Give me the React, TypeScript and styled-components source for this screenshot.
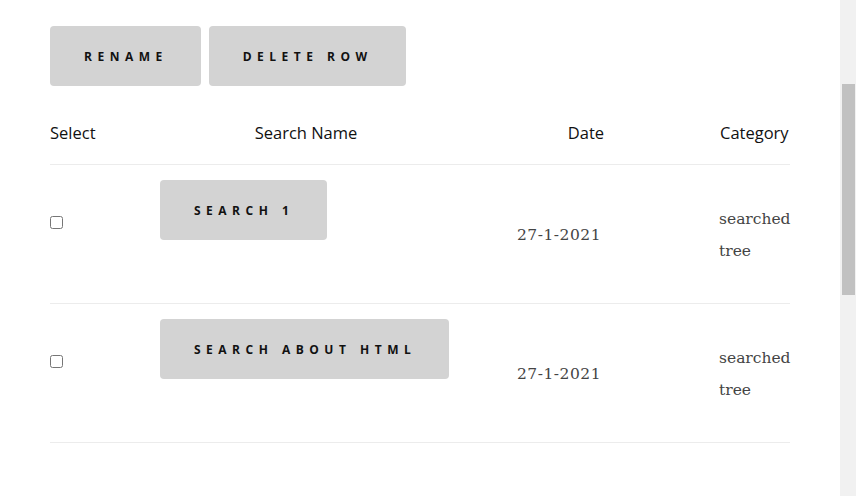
import React from "react";
import styled, { createGlobalStyle } from "styled-components";

const GlobalStyle = createGlobalStyle`
  html, body { margin: 0; padding: 0; background: #fff; overflow: hidden; }
  * { box-sizing: border-box; }
`;

const Page = styled.div`
  display: flex;
  width: 856px;
  height: 496px;
  background: #fff;
`;

const Main = styled.main`
  flex: 1;
  padding: 26px 50px 0 50px;
  font-family: "Open Sans", "Liberation Sans", sans-serif;
`;

const ScrollTrack = styled.div`
  width: 16px;
  background: #f1f1f1;
  padding: 84px 1px 0 2px;
`;

const ScrollThumb = styled.div`
  height: 211px;
  background: #c1c1c1;
`;

const Toolbar = styled.div`
  display: flex;
  gap: 8px;
`;

const ActionButton = styled.button`
  height: 60px;
  padding: 0 33px 0 34px;
  border: none;
  border-radius: 4px;
  background: #d3d3d3;
  color: #111;
  font-family: "Open Sans", "Liberation Sans", sans-serif;
  font-weight: 700;
  font-size: 12px;
  letter-spacing: 5.5px;
  text-transform: uppercase;
  white-space: nowrap;
  cursor: pointer;
`;

const Table = styled.div`
  margin-top: 16px;
  width: 740px;
`;

const Row = styled.div<{ $header?: boolean }>`
  display: grid;
  grid-template-columns: 110px 292px 268px 70px;
  border-bottom: 1px solid #ececec;
  height: ${(p) => (p.$header ? "63px" : "139px")};
  align-items: center;
`;

const HeadCell = styled.div<{ $align: "left" | "center" }>`
  text-align: ${(p) => p.$align};
  font-size: 16.5px;
  font-weight: 500;
  color: #111;
  line-height: 24px;
  white-space: nowrap;
`;

const CheckCell = styled.div`
  align-self: start;
  padding-top: 51px;
  height: 100%;
`;

const Check = styled.input`
  margin: 0;
  width: 13px;
  height: 13px;
  display: block;
`;

const NameCell = styled.div`
  align-self: start;
  padding-top: 15px;
`;

const DateCell = styled.div`
  padding-left: 65px;
  padding-top: 1px;
  font-family: "DejaVu Serif", "Liberation Serif", serif;
  font-size: 15.5px;
  letter-spacing: 0.5px;
  color: #444;
`;

const CategoryCell = styled.div`
  padding-top: 1px;
  margin-left: -1px;
  font-family: "DejaVu Serif", "Liberation Serif", serif;
  font-size: 15.5px;
  line-height: 32px;
  color: #444;
`;

const rows = [
  { name: "Search 1", date: "27-1-2021", category: "searched tree" },
  { name: "Search about HTML", date: "27-1-2021", category: "searched tree" },
];

export default function App() {
  return (
    <>
      <GlobalStyle />
      <Page>
        <Main>
          <Toolbar>
            <ActionButton>Rename</ActionButton>
            <ActionButton>Delete Row</ActionButton>
          </Toolbar>
          <Table>
            <Row $header>
              <HeadCell $align="left">Select</HeadCell>
              <HeadCell $align="center">Search Name</HeadCell>
              <HeadCell $align="center">Date</HeadCell>
              <HeadCell $align="left">Category</HeadCell>
            </Row>
            {rows.map((r) => (
              <Row key={r.name}>
                <CheckCell>
                  <Check type="checkbox" />
                </CheckCell>
                <NameCell>
                  <ActionButton>{r.name}</ActionButton>
                </NameCell>
                <DateCell>{r.date}</DateCell>
                <CategoryCell>{r.category}</CategoryCell>
              </Row>
            ))}
          </Table>
        </Main>
        <ScrollTrack>
          <ScrollThumb />
        </ScrollTrack>
      </Page>
    </>
  );
}
